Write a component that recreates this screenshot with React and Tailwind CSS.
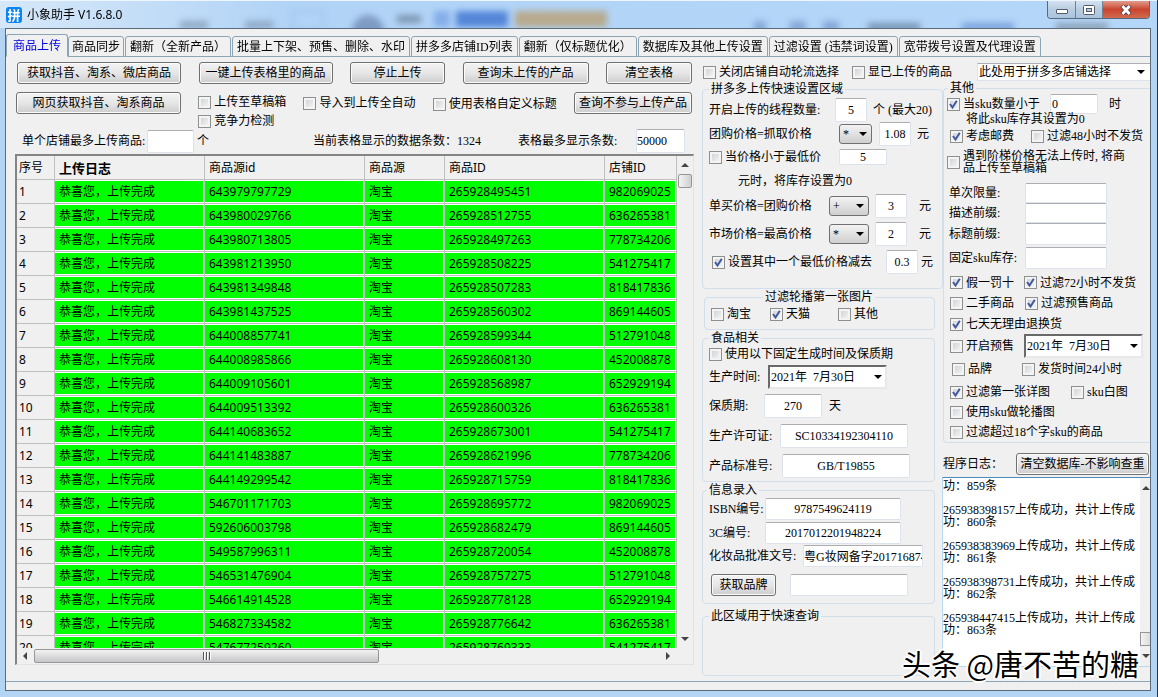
import React from 'react';
import { clsx } from 'clsx';

const TABS = [
    '商品上传',
    '商品同步',
    '翻新（全新产品）',
    '批量上下架、预售、删除、水印',
    '拼多多店铺ID列表',
    '翻新（仅标题优化）',
    '数据库及其他上传设置',
    '过滤设置 (违禁词设置)',
    '宽带拨号设置及代理设置',
];

// [商品源id, 商品ID, 店铺ID]
const ROWS = [
    ['643979797729', '265928495451', '982069025'],
    ['643980029766', '265928512755', '636265381'],
    ['643980713805', '265928497263', '778734206'],
    ['643981213950', '265928508225', '541275417'],
    ['643981349848', '265928507283', '818417836'],
    ['643981437525', '265928560302', '869144605'],
    ['644008857741', '265928599344', '512791048'],
    ['644008985866', '265928608130', '452008878'],
    ['644009105601', '265928568987', '652929194'],
    ['644009513392', '265928600326', '636265381'],
    ['644140683652', '265928673001', '541275417'],
    ['644141483887', '265928621996', '778734206'],
    ['644149299542', '265928715759', '818417836'],
    ['546701171703', '265928695772', '982069025'],
    ['592606003798', '265928682479', '869144605'],
    ['549587996311', '265928720054', '452008878'],
    ['546531476904', '265928757275', '512791048'],
    ['546614914528', '265928778128', '652929194'],
    ['546827334582', '265928776642', '636265381'],
    ['547677259260', '265928769333', '541275417'],
];

const LOG = [
    '功：859条',
    '265938398157上传成功，共计上传成功：860条',
    '265938383969上传成功，共计上传成功：861条',
    '265938398731上传成功，共计上传成功：862条',
    '265938447415上传成功，共计上传成功：863条',
].join('\n\n');

const TODAY = '2021年\u00a0\u00a07月30日';

function Button({ className, children }) {
    return (
        <button
            type="button"
            className={clsx(
                'h-[22px] shrink-0 whitespace-nowrap rounded-[3px] border border-[#707070] bg-linear-to-b from-[#f3f3f3] via-[#e6e6e6] to-[#cdcdcd] text-center leading-5 shadow-[inset_0_0_0_1px_#fbfbfb]',
                className
            )}
        >
            {children}
        </button>
    );
}

function Check({ label, checked, className }) {
    return (
        <label className={clsx('flex shrink-0 items-center gap-[3px] whitespace-nowrap', className)}>
            <span className="relative flex size-[13px] shrink-0">
                <input
                    type="checkbox"
                    defaultChecked={checked}
                    className="peer size-[13px] appearance-none border border-[#8e8f8f] bg-linear-to-br from-[#c8cdd3] to-[#fafafa] shadow-[inset_0_0_0_2px_#f4f4f4]"
                />
                <svg viewBox="0 0 13 13" className="pointer-events-none absolute inset-0 hidden size-[13px] peer-checked:block">
                    <path d="M3 6 L5.5 9.5 L9.8 2.8" fill="none" stroke="#41599c" strokeWidth="2" />
                </svg>
            </span>
            <span>{label}</span>
        </label>
    );
}

function TextBox({ className, ...props }) {
    return (
        <input
            type="text"
            className={clsx('min-w-0 shrink-0 rounded-[2px] border border-[#dde3ec] border-t-[#abadb3] bg-white', className)}
            {...props}
        />
    );
}

function Arrow({ dir = 'down', className }) {
    const points = { down: '0,0 8,0 4,4', up: '0,4 8,4 4,0', left: '4,0 4,8 0,4', right: '0,0 0,8 4,4' };
    const side = dir === 'left' || dir === 'right';
    return (
        <svg viewBox={side ? '0 0 4 8' : '0 0 8 4'} className={clsx('pointer-events-none shrink-0', side ? 'h-2 w-1' : 'h-1 w-2', className)}>
            <polygon points={points[dir]} fill="currentColor" />
        </svg>
    );
}

function Select({ className, boxClass, options, ...props }) {
    return (
        <span className={clsx('relative flex shrink-0 items-center', className)}>
            <select className={clsx('size-full appearance-none whitespace-nowrap outline-none', boxClass)} {...props}>
                {options.map((o) => (
                    <option key={o}>{o}</option>
                ))}
            </select>
            <Arrow className="absolute right-[5px]" />
        </span>
    );
}

const opBox = 'rounded-[3px] border border-[#707070] bg-linear-to-b from-[#f3f3f3] to-[#cfcfcf] pl-[3px]';
const dateBox = 'border-2 border-[#e8e8e8] border-t-[#696969] border-l-[#696969] bg-white pl-px';

function Group({ title, className, legendClass, children }) {
    return (
        <fieldset className={clsx('min-w-0 rounded-[4px] border border-[#d0dfe9]', className)}>
            <legend className={clsx('h-3.5 px-0.5 leading-3.5', legendClass)}>{title}</legend>
            {children}
        </fieldset>
    );
}

function Row({ className, children }) {
    return <div className={clsx('flex items-center whitespace-nowrap pl-1.5', className)}>{children}</div>;
}

function TitleBar() {
    return (
        <header className="relative flex h-7 shrink-0 items-center overflow-hidden border-t border-[#eef6fd] bg-linear-to-r from-[#d6e8f8] via-[#b1d3f6] via-25% to-[#b4d6f9] pl-1.5">
            <div className="absolute inset-0 blur-[3px]" aria-hidden="true">
                <div className="absolute left-[180px] top-5 h-2 w-7 bg-[#8fa9c6]" />
                <div className="absolute left-[245px] top-5 h-2 w-7 bg-[#8fa9c6]" />
                <div className="absolute left-[292px] top-2.5 h-5 w-8 rounded border border-[#8dafd8]" />
                <div className="absolute left-[352px] top-3.5 size-8 rounded-full bg-[#7f9bc4]" />
                <div className="absolute left-[397px] top-3.5 h-2 w-6 bg-[#7d97b3]" />
                <div className="absolute left-[434px] top-2.5 h-4 w-4 bg-[#85aeea]" />
                <div className="absolute left-[456px] top-2.5 h-4 w-13 bg-[#5486d8]" />
                <div className="absolute left-[515px] top-2.5 h-4 w-23 bg-[#b7aa8d]" />
                <div className="absolute left-[754px] top-5 h-3 w-3 bg-[#86a9d8]" />
                <div className="absolute left-[790px] top-5 h-3 w-4 bg-[#86a9d8]" />
                <div className="absolute left-[823px] top-5 h-3 w-4 bg-[#86a9d8]" />
                <div className="absolute left-[868px] top-5.5 h-2 w-13 bg-[#7895b4]" />
                <div className="absolute left-[962px] top-5.5 h-2 w-13 bg-[#7ba3dc]" />
                <div className="absolute left-[1056px] top-5.5 h-2 w-13 bg-[#8ca3b8]" />
            </div>
            <div className="relative flex items-center gap-[5px] font-['Noto_Sans','Noto_Sans_CJK_SC',sans-serif]">
                <span className="flex size-4 items-center justify-center rounded-[3px] bg-[#0a84f5] text-[13px] font-bold leading-4 text-white">拼</span>
                <h1>小象助手 V1.6.8.0</h1>
            </div>
            <div className="absolute right-[7px] top-0 flex h-[18px] overflow-hidden rounded-b-[4px] border border-t-0 border-[#56697d]">
                <button type="button" aria-label="最小化" className="flex w-7 items-end justify-center border-r border-[#6e8296] bg-linear-to-b from-[#d3e2f1] via-[#b9cde0] to-[#a9c4de] pb-1">
                    <span className="h-[5px] w-3 rounded-[1px] border border-[#535b66] bg-white" />
                </button>
                <button type="button" aria-label="最大化" className="flex w-[27px] items-center justify-center border-r border-[#6e8296] bg-linear-to-b from-[#d3e2f1] via-[#b9cde0] to-[#a9c4de]">
                    <svg viewBox="0 0 12 10" className="h-2.5 w-3">
                        <rect x="0.5" y="0.5" width="11" height="9" rx="1" fill="#fff" stroke="#535b66" />
                        <rect x="3.5" y="3.5" width="5" height="3" fill="#b9cde0" stroke="#535b66" />
                    </svg>
                </button>
                <button type="button" aria-label="关闭" className="flex w-[46px] items-center justify-center bg-linear-to-b from-[#e09a8b] via-[#c9442c] to-[#d06a4e]">
                    <svg viewBox="0 0 12 10" className="h-2.5 w-3">
                        <path d="M2 0.5 L10 9.5 M10 0.5 L2 9.5" stroke="#5c3a48" strokeWidth="4.6" />
                        <path d="M2.4 1 L9.6 9 M9.6 1 L2.4 9" stroke="#fff" strokeWidth="2.8" />
                    </svg>
                </button>
            </div>
        </header>
    );
}

function Tabs() {
    return (
        <nav className="relative z-10 -mb-px flex h-[23px] shrink-0 items-end" role="tablist">
            {TABS.map((tab, i) => (
                <button
                    key={tab}
                    type="button"
                    role="tab"
                    aria-selected={i === 0}
                    className={clsx(
                        'whitespace-nowrap rounded-t-[3px] border border-[#8ca5b5]',
                        i === 0 ? 'h-[23px] border-b-[#f0f0f0] px-1.5 text-[#0000e0]' : 'mr-px h-[21px]',
                        i === 1 ? 'px-[3px]' : i > 1 && 'px-1'
                    )}
                >
                    {tab}
                </button>
            ))}
        </nav>
    );
}

function Cell({ children }) {
    return (
        <td className="border-b border-r border-[#c0c0c0] bg-white p-0">
            <div className="my-px mr-px h-[21px] overflow-hidden whitespace-nowrap bg-[#00ff00] pl-1 leading-[21px]">{children}</div>
        </td>
    );
}

function ProductTable() {
    const th = 'h-6 border-b border-r border-[#c0c0c0] p-0 pl-1 text-left font-normal';
    return (
        <div className="flex min-h-0 flex-1 flex-col border-2 border-b border-r-[1px] border-[#e3e3e3] border-l-[#848484] border-t-[#848484] font-['Noto_Sans','Noto_Sans_CJK_SC',sans-serif]">
            <div className="flex min-h-0 flex-1">
                <div className="min-w-0 flex-1 overflow-hidden">
                    <table className="w-full table-fixed border-separate border-spacing-0">
                        <colgroup>
                            <col className="w-[38px]" />
                            <col className="w-[150px]" />
                            <col className="w-[160px]" />
                            <col className="w-[80px]" />
                            <col className="w-[160px]" />
                            <col />
                        </colgroup>
                        <thead>
                            <tr>
                                <th className="h-6 border-b border-r border-[#c0c0c0] p-0 pl-0.5 text-left font-normal">序号</th>
                                <th className="h-6 border-b border-r border-[#c0c0c0] p-0 pl-1 text-left text-[13px] font-bold">上传日志</th>
                                <th className={th}>商品源id</th>
                                <th className={th}>商品源</th>
                                <th className={th}>商品ID</th>
                                <th className={th}>店铺ID</th>
                            </tr>
                        </thead>
                        <tbody>
                            {ROWS.map(([source, product, shop], i) => (
                                <tr key={source}>
                                    <td className="h-6 border-b border-r border-[#c0c0c0] p-0 pl-0.5">{i + 1}</td>
                                    <Cell>恭喜您，上传完成</Cell>
                                    <Cell>{source}</Cell>
                                    <Cell>淘宝</Cell>
                                    <Cell>{product}</Cell>
                                    <Cell>{shop}</Cell>
                                </tr>
                            ))}
                        </tbody>
                    </table>
                </div>
                <div className="flex w-4 flex-col items-center bg-[#f0f0f0] py-[7px] text-[#444]">
                    <Arrow dir="up" />
                    <div className="mt-[7px] h-3.5 w-3.5 rounded-[2px] border border-[#979797] bg-linear-to-r from-[#f4f4f4] to-[#cfcfcf]" />
                    <Arrow className="mt-auto" />
                </div>
            </div>
            <div className="flex h-4 shrink-0 items-center pl-1.5 pr-[23px] text-[#444]">
                <Arrow dir="left" />
                <div className="ml-[7px] flex h-3.5 w-[345px] items-center justify-center gap-px rounded-[2px] border border-[#979797] bg-linear-to-b from-[#f2f2f2] to-[#c6c6c8]">
                    <span className="h-2 w-0.5 border-r border-white bg-[#555]" />
                    <span className="h-2 w-0.5 border-r border-white bg-[#555]" />
                    <span className="h-2 w-0.5 border-r border-white bg-[#555]" />
                </div>
                <Arrow dir="right" className="ml-auto" />
            </div>
        </div>
    );
}

function UploadPanel() {
    return (
        <section className="flex min-w-0 flex-1 flex-col pb-4 pl-[9px] pr-2 pt-[5px]">
            <div className="flex h-[30px] items-start justify-between px-0.5">
                <Button className="w-[164px]">获取抖音、淘系、微店商品</Button>
                <Button className="w-[134px]">一键上传表格里的商品</Button>
                <Button className="w-[95px]">停止上传</Button>
                <Button className="w-[126px]">查询未上传的产品</Button>
                <Button className="w-[86px]">清空表格</Button>
            </div>
            <div className="flex h-9 items-start justify-between pl-px pr-0.5">
                <Button className="w-[165px]">网页获取抖音、淘系商品</Button>
                <div>
                    <Check label="上传至草稿箱" className="h-5" />
                    <Check label="竞争力检测" className="h-[18px]" />
                </div>
                <Check label="导入到上传全自动" className="h-[22px]" />
                <Check label="使用表格自定义标题" className="h-6" />
                <Button className="w-[118px]">查询不参与上传产品</Button>
            </div>
            <div className="flex h-[26px] items-center whitespace-nowrap pl-[7px] pr-[9px]">
                <label htmlFor="shopMax" className="w-[125px]">单个店铺最多上传商品:</label>
                <TextBox id="shopMax" className="h-[23px] w-[47px] border-t-[#5a9ad0]" />
                <span className="ml-[3px]">个</span>
                <span className="ml-[104px]">当前表格显示的数据条数：1324</span>
                <label htmlFor="tableMax" className="ml-[37px]">表格最多显示条数:</label>
                <TextBox id="tableMax" className="ml-auto h-6 w-[49px]" defaultValue="50000" />
            </div>
            <ProductTable />
        </section>
    );
}

function QuickSettings() {
    return (
        <div className="flex w-[241px] shrink-0 flex-col pb-[5px]">
            <Group title="拼多多上传快速设置区域" className="pb-[14px] pt-0.5" legendClass="ml-1.5">
                <Row className="h-6">
                    <label htmlFor="threads" className="w-[126px]">开启上传的线程数量:</label>
                    <TextBox id="threads" className="h-6 w-8 text-center" defaultValue="5" />
                    <span className="ml-1.5">个 (最大20)</span>
                </Row>
                <Row className="h-6">
                    <label htmlFor="groupPrice" className="w-[130px]">团购价格=抓取价格</label>
                    <Select className="h-5 w-[33px]" boxClass={opBox} options={['*', '+']} aria-label="团购价格运算" />
                    <TextBox id="groupPrice" className="ml-[7px] h-6 w-8 text-center" defaultValue="1.08" />
                    <span className="ml-1.5">元</span>
                </Row>
                <Row className="h-[22px]">
                    <Check label="当价格小于最低价" className="w-[130px]" />
                    <TextBox className="h-4 w-12 text-center" defaultValue="5" aria-label="最低价" />
                </Row>
                <p className="h-[26px] pl-[35px] leading-[26px]">元时，将库存设置为0</p>
                <Row className="h-6">
                    <label htmlFor="singlePrice" className="w-[120px]">单买价格=团购价格</label>
                    <Select className="h-5 w-10" boxClass={opBox} options={['+', '*']} aria-label="单买价格运算" />
                    <TextBox id="singlePrice" className="ml-1.5 h-6 w-8 text-center" defaultValue="3" />
                    <span className="ml-3">元</span>
                </Row>
                <Row className="mt-1 h-6">
                    <label htmlFor="marketPrice" className="w-[120px]">市场价格=最高价格</label>
                    <Select className="h-5 w-10" boxClass={opBox} options={['*', '+']} aria-label="市场价格运算" />
                    <TextBox id="marketPrice" className="ml-1.5 h-6 w-8 text-center" defaultValue="2" />
                    <span className="ml-3">元</span>
                </Row>
                <Row className="mt-1 h-6">
                    <Check label="设置其中一个最低价格减去" checked className="ml-[3px] w-[174px]" />
                    <TextBox className="h-6 w-8 text-center" defaultValue="0.3" aria-label="减去金额" />
                    <span className="ml-[3px]">元</span>
                </Row>
            </Group>

            <Group title="过滤轮播第一张图片" className="ml-0.5 mr-2 mt-px pb-[5px]" legendClass="ml-[58px]">
                <Row className="h-5 pl-1">
                    <Check label="淘宝" className="w-[59px]" />
                    <Check label="天猫" checked className="w-[68px]" />
                    <Check label="其他" />
                </Row>
            </Group>

            <Group title="食品相关" className="mr-2 mt-px" legendClass="ml-1.5">
                <Row className="h-[18px]">
                    <Check label="使用以下固定生成时间及保质期" />
                </Row>
                <Row className="h-7">
                    <label htmlFor="madeAt" className="w-[59px]">生产时间:</label>
                    <Select id="madeAt" className="h-6 w-[119px]" boxClass={dateBox} options={[TODAY]} />
                </Row>
                <Row className="h-[30px]">
                    <label htmlFor="shelfLife" className="w-[55px]">保质期:</label>
                    <TextBox id="shelfLife" className="h-6 w-[58px] text-center" defaultValue="270" />
                    <span className="ml-[7px]">天</span>
                </Row>
                <Row className="h-[30px]">
                    <label htmlFor="licence" className="w-[71px]">生产许可证:</label>
                    <TextBox id="licence" className="h-6 w-32 text-center" defaultValue="SC10334192304110" />
                </Row>
                <Row className="h-[30px]">
                    <label htmlFor="standard" className="w-[73px]">产品标准号:</label>
                    <TextBox id="standard" className="h-6 w-32 text-center" defaultValue="GB/T19855" />
                </Row>
            </Group>

            <Group title="信息录入" className="mr-2 mt-px" legendClass="ml-1">
                <Row className="h-6">
                    <label htmlFor="isbn" className="w-[56px]">ISBN编号:</label>
                    <TextBox id="isbn" className="h-[22px] w-[136px] text-center" defaultValue="9787549624119" />
                </Row>
                <Row className="h-6">
                    <label htmlFor="ccc" className="w-[56px]">3C编号:</label>
                    <TextBox id="ccc" className="h-[22px] w-[136px] text-center" defaultValue="2017012201948224" />
                </Row>
                <Row className="h-[22px]">
                    <label htmlFor="cosmetic" className="w-[94px]">化妆品批准文号:</label>
                    <TextBox id="cosmetic" className="h-[22px] w-[120px]" defaultValue="粤G妆网备字2017168743" />
                </Row>
                <Row className="h-9">
                    <Button className="ml-0.5 h-6 w-[65px]">获取品牌</Button>
                    <TextBox className="ml-3.5 h-[22px] w-[118px]" aria-label="品牌" />
                </Row>
            </Group>

            <Group title="此区域用于快速查询" className="mr-2 mt-[5px] flex-1" legendClass="ml-1.5" />
        </div>
    );
}

function OtherSettings() {
    return (
        <div className="flex min-w-0 flex-1 flex-col pb-3.5">
            <Group title="其他" className="-mt-px rounded-r-none border-r-0" legendClass="ml-1">
                <Row className="h-[18px] pl-[3px]">
                    <Check label="当sku数量小于" checked className="w-[103px]" />
                    <TextBox className="h-5 w-12 pl-px" defaultValue="0" aria-label="sku数量" />
                    <span className="ml-[11px]">时</span>
                </Row>
                <p className="pl-[22px] leading-3">将此sku库存其设置为0</p>
                <Row className="h-[22px] pl-0.5">
                    <Check label="考虑邮费" checked className="w-[81px]" />
                    <Check label="过滤48小时不发货" />
                </Row>
                <Row className="h-[30px] pl-[3px] leading-3">
                    <Check label={<>遇到阶梯价格无法上传时, 将商<br />品上传至草稿箱</>} />
                </Row>
                <Row className="mt-1.5 h-5 pl-[5px]">
                    <label htmlFor="limit" className="w-[76px]">单次限量:</label>
                    <TextBox id="limit" className="h-5 w-[82px]" />
                </Row>
                <Row className="h-5 pl-[5px]">
                    <label htmlFor="descPrefix" className="w-[76px]">描述前缀:</label>
                    <TextBox id="descPrefix" className="h-5 w-[82px]" />
                </Row>
                <Row className="h-[22px] pl-[5px]">
                    <label htmlFor="titlePrefix" className="w-[76px]">标题前缀:</label>
                    <TextBox id="titlePrefix" className="h-[22px] w-[82px]" />
                </Row>
                <Row className="h-[26px] pl-[5px]">
                    <label htmlFor="stock" className="w-[76px]">固定sku库存:</label>
                    <TextBox id="stock" className="h-[22px] w-[82px]" />
                </Row>
                <Row className="h-[23px]">
                    <Check label="假一罚十" checked className="w-[74px]" />
                    <Check label="过滤72小时不发货" checked />
                </Row>
                <Row className="h-[18px]">
                    <Check label="二手商品" className="w-[75px]" />
                    <Check label="过滤预售商品" checked />
                </Row>
                <Row className="h-6">
                    <Check label="七天无理由退换货" checked />
                </Row>
                <Row className="h-5">
                    <Check label="开启预售" className="w-[74px]" />
                    <Select className="h-6 w-[119px]" boxClass={dateBox} options={[TODAY]} aria-label="预售时间" />
                </Row>
                <Row className="h-[26px] pl-2">
                    <Check label="品牌" className="w-[70px]" />
                    <Check label="发货时间24小时" />
                </Row>
                <Row className="h-5">
                    <Check label="过滤第一张详图" checked className="w-[121px]" />
                    <Check label="sku白图" />
                </Row>
                <Row className="h-5">
                    <Check label="使用sku做轮播图" />
                </Row>
                <Row className="h-5">
                    <Check label="过滤超过18个字sku的商品" />
                </Row>
            </Group>
            <div className="mb-px mt-[9px] flex h-6 items-center justify-between pr-px">
                <label htmlFor="log">程序日志：</label>
                <Button className="h-6 w-[133px]">清空数据库-不影响查重</Button>
            </div>
            <div className="-ml-px flex min-h-0 flex-1 border border-r-0 border-[#b9d9ee] border-t-[#4a8cc0] bg-white">
                <textarea
                    id="log"
                    readOnly
                    value={LOG}
                    className="min-w-0 flex-1 resize-none overflow-hidden break-all pt-0.5 leading-3 outline-none"
                />
                <div className="flex w-2.5 shrink-0 flex-col items-end overflow-hidden bg-[#f0f0f0] py-2 text-[#444]">
                    <Arrow dir="up" />
                    <div className="mb-2 mt-auto h-3.5 w-full border border-r-0 border-[#979797] bg-linear-to-r from-[#f4f4f4] to-[#dcdcdc]" />
                    <Arrow />
                </div>
            </div>
        </div>
    );
}

export default function App() {
    return (
        <div className="relative flex h-screen flex-col overflow-hidden border-r border-[#2a3440] bg-[#b4d4f4] font-['Liberation_Serif','Noto_Sans_CJK_SC',serif] text-[12px] leading-4 text-black">
            <TitleBar />
            <main className="mb-1.5 ml-[5px] mr-1.5 flex min-h-0 flex-1 flex-col border border-[#5a6b7c] bg-[#f0f0f0] pb-2 pt-[5px]">
                <Tabs />
                <div className="flex min-h-0 flex-1 border-y border-[#8ca5b5]">
                    <UploadPanel />
                    <div className="flex w-[448px] shrink-0 flex-col pt-1.5">
                        <div className="mb-px flex h-[18px] shrink-0 items-center">
                            <Check label="关闭店铺自动轮流选择" className="ml-px w-[149px]" />
                            <Check label="显已上传的商品" />
                            <Select
                                className="ml-auto h-[18px] w-[173px]"
                                boxClass="border border-r-0 border-[#dde3ec] border-t-[#abadb3] bg-white pl-px"
                                options={['此处用于拼多多店铺选择']}
                                aria-label="店铺选择"
                            />
                        </div>
                        <div className="flex min-h-0 flex-1">
                            <QuickSettings />
                            <OtherSettings />
                        </div>
                    </div>
                </div>
            </main>
            <div className="pointer-events-none absolute bottom-3.5 right-[18px] whitespace-nowrap font-['Noto_Sans_CJK_SC',sans-serif] text-[29px] leading-10 [text-shadow:2px_0_#fff,-2px_0_#fff,0_2px_#fff,0_-2px_#fff,1px_1px_#fff,-1px_-1px_#fff]">
                头条 @唐不苦的糖
            </div>
        </div>
    );
}
